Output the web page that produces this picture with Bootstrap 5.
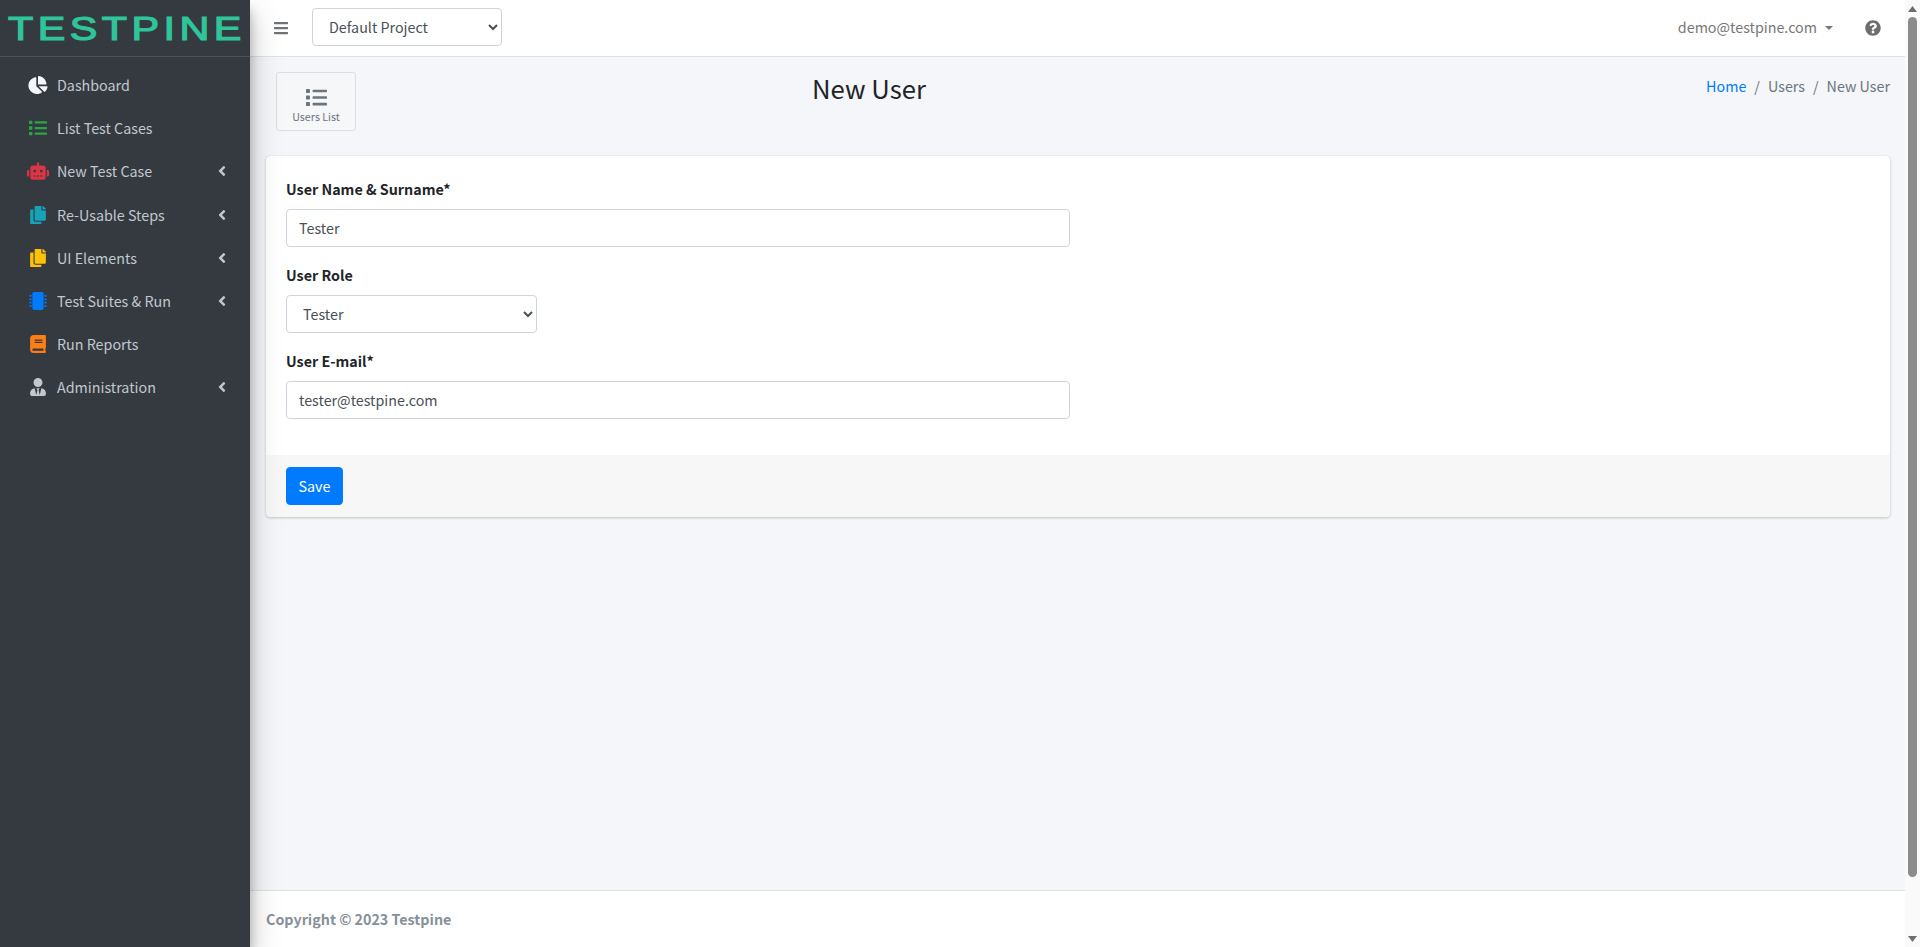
<!DOCTYPE html>
<html lang="en">
<head>
<meta charset="utf-8">
<title>New User</title>
<link href="https://cdn.jsdelivr.net/npm/bootstrap@5.3.0/dist/css/bootstrap.min.css" rel="stylesheet">
<style>
html,body{height:100%;overflow:hidden}
body{font-family:"Noto Sans CJK SC","Noto Sans CJK JP",sans-serif;font-size:14.3px;line-height:24px;color:#212529;background:#f4f6f9}
.app-shell{height:947px}
.side-panel{width:250px;flex:0 0 250px;background:#343a40;box-shadow:0 14px 28px rgba(0,0,0,.25),0 10px 10px rgba(0,0,0,.22);position:relative;z-index:5}
.brand-box{height:57px;border-bottom:1px solid #4b545c;overflow:hidden;padding-left:8px}
.brand-text{display:block;font-family:"Liberation Sans",sans-serif;font-size:33.5px;line-height:58px;font-weight:400;color:#2fc49a;letter-spacing:3.6px;white-space:nowrap;transform-origin:0 50%;transform:scaleX(1.235);-webkit-text-stroke:1.2px #2fc49a}
.side-list{padding-top:8px}
.side-link{height:40px;margin-bottom:3.2px;padding:0 24.5px 0 26.5px;color:#c2c7d0;text-decoration:none}
.side-link span{flex:1;margin-left:8.5px}
.side-ico{width:22px;height:18px;flex:0 0 22px;fill:currentColor}
.chev{width:8px;height:16px;fill:#c2c7d0;flex:0 0 8px}
.ico-white{color:#f4f6f9}.ico-green{color:#28a745}.ico-red{color:#dc3545}.ico-teal{color:#17a2b8}.ico-yellow{color:#ffc107}.ico-blue{color:#007bff}.ico-orange{color:#fd7e14}.ico-gray{color:#c2c7d0}
.main-col{min-width:0}
.top-bar{height:57px;background:#fff;border-bottom:1px solid #dee2e6;padding:0 24px 0 24px}
.bars-ico{width:14px;height:16px;fill:#6f7478}
.native-select{appearance:auto;-webkit-appearance:auto;background-image:none;color:#495057;height:38px;padding:5px 12px 7px;font-size:14.3px;border:1px solid #ced4da;border-radius:4px;background-color:#fff}
.project-select{width:190px;margin-left:24px;margin-bottom:2px}
.user-menu{color:#777;text-decoration:none;margin-right:32px;padding-bottom:2px}
.user-menu::after{content:"";display:inline-block;margin-left:8px;vertical-align:3px;border-top:4px solid #777;border-left:4px solid transparent;border-right:4px solid transparent}
.help-ico{width:16px;height:16px;fill:#6e6e6e}
.content-area{min-height:0;padding:15px 15px 0 16px}
.head-row{height:84px;padding-left:10px}
.tool-btn{width:80px;height:59px;border:1px solid #ddd;border-radius:3px;background:#f6f7f9;color:#6c757d;font-size:10.7px;line-height:16px;padding-top:14px;text-decoration:none}
.tool-ico{width:21px;height:21px;fill:#6c757d;display:block;margin:0 auto 1px}
.page-title{font-size:25.7px;line-height:32px;font-weight:400;margin:0 0 0 456px;white-space:nowrap}
.crumbs{font-size:14.3px;margin:0 0 0 auto;padding-top:2px}
.crumbs .breadcrumb-item+.breadcrumb-item::before{color:#6c757d}
.crumbs a{color:#007bff;text-decoration:none}
.crumbs .active{color:#6c757d}
.form-panel{border:0;border-radius:4px;box-shadow:0 0 1px rgba(0,0,0,.125),0 1px 3px rgba(0,0,0,.2);height:361px;width:1624px}
.form-panel .card-body{padding:21px 20px 20px}
.field-group{margin-bottom:16px}
.field-label{font-weight:700;display:block;margin-bottom:8px;line-height:24px}
.wide-input{width:784px;height:38px;color:#495057;border-color:#ced4da;border-radius:4px;padding:5px 12px 7px;font-size:14.3px}
.role-select{width:251px;display:block}
.panel-foot{background:#f7f7f7;border:0;padding:12px 20px;border-radius:0 0 4px 4px}
.save-btn{background:#007bff;border-color:#007bff;border-radius:4px;height:38px;width:57px;padding:0;font-size:14.3px}
.page-foot{height:57px;background:#fff;border-top:1px solid #dee2e6;padding:0 16px;color:#869099;font-weight:700}
.fake-scroll{width:15px;flex:0 0 15px;background:#fafafa}
.scroll-up,.scroll-down{height:17px}
.scroll-up svg,.scroll-down svg{width:9px;height:6px;fill:#6e6e6e}
.scroll-thumb{height:860px;width:9px;background:#8b8b8b;border-radius:5px}
</style>
</head>
<body>
<div class="app-shell d-flex">
  <aside class="side-panel d-flex flex-column">
    <div class="brand-box"><span class="brand-text">TESTPINE</span></div>
    <nav class="side-list">
      <a class="side-link d-flex align-items-center" href="#"><svg class="side-ico ico-white" viewBox="0 0 544 512"><path d="M527.79 288H290.5l158.03 158.03c6.04 6.04 15.98 6.53 22.19 .68 38.7-36.46 65.32-85.61 73.13-140.86 1.34-9.46-6.51-17.85-16.06-17.85zm-15.83-64.8C503.72 103.74 408.26 8.28 288.8 .04 279.68-.59 272 7.1 272 16.24V240h223.77c9.14 0 16.82-7.68 16.19-16.8zM224 288V50.71c0-9.55-8.39-17.4-17.84-16.06C86.99 51.49-4.1 155.6 .14 280.37 4.5 408.51 114.83 513.59 243.03 511.98c50.4-.63 96.97-16.87 135.26-44.03 7.9-5.6 8.42-17.23 1.57-24.08L224 288z"/></svg><span>Dashboard</span></a>
      <a class="side-link d-flex align-items-center" href="#"><svg class="side-ico ico-green" viewBox="0 0 512 512"><path d="M80 368H16a16 16 0 0 0-16 16v64a16 16 0 0 0 16 16h64a16 16 0 0 0 16-16v-64a16 16 0 0 0-16-16zm0-320H16A16 16 0 0 0 0 64v64a16 16 0 0 0 16 16h64a16 16 0 0 0 16-16V64a16 16 0 0 0-16-16zm0 160H16a16 16 0 0 0-16 16v64a16 16 0 0 0 16 16h64a16 16 0 0 0 16-16v-64a16 16 0 0 0-16-16zm416 176H176a16 16 0 0 0-16 16v32a16 16 0 0 0 16 16h320a16 16 0 0 0 16-16v-32a16 16 0 0 0-16-16zm0-320H176a16 16 0 0 0-16 16v32a16 16 0 0 0 16 16h320a16 16 0 0 0 16-16V80a16 16 0 0 0-16-16zm0 160H176a16 16 0 0 0-16 16v32a16 16 0 0 0 16 16h320a16 16 0 0 0 16-16v-32a16 16 0 0 0-16-16z"/></svg><span>List Test Cases</span></a>
      <a class="side-link d-flex align-items-center" href="#"><svg class="side-ico ico-red" viewBox="0 0 640 512"><path d="M32,224H64V416H32A31.96166,31.96166,0,0,1,0,384V256A31.96166,31.96166,0,0,1,32,224Zm512-48V448a64.06328,64.06328,0,0,1-64,64H160a64.06328,64.06328,0,0,1-64-64V176a79.974,79.974,0,0,1,80-80H288V32a32,32,0,0,1,64,0V96H464A79.974,79.974,0,0,1,544,176ZM264,256a40,40,0,1,0-40,40A39.997,39.997,0,0,0,264,256Zm-8,128H192v32h64Zm96,0H288v32h64ZM456,256a40,40,0,1,0-40,40A39.997,39.997,0,0,0,456,256Zm-8,128H384v32h64ZM640,256V384a31.96166,31.96166,0,0,1-32,32H576V224h32A31.96166,31.96166,0,0,1,640,256Z"/></svg><span>New Test Case</span><svg class="chev" viewBox="0 0 256 512"><path d="M31.7 239l136-136c9.4-9.4 24.6-9.4 33.9 0l22.6 22.6c9.4 9.4 9.4 24.6 0 33.9L127.9 256l96.4 96.4c9.4 9.4 9.4 24.6 0 33.9L201.7 409c-9.4 9.4-24.6 9.4-33.9 0l-136-136c-9.5-9.4-9.5-24.6-.1-34z"/></svg></a>
      <a class="side-link d-flex align-items-center" href="#"><svg class="side-ico ico-teal" viewBox="0 0 448 512"><path d="M320 448v40c0 13.255-10.745 24-24 24H24c-13.255 0-24-10.745-24-24V120c0-13.255 10.745-24 24-24h72v296c0 30.879 25.121 56 56 56h168zm0-344V0H152c-13.255 0-24 10.745-24 24v368c0 13.255 10.745 24 24 24h272c13.255 0 24-10.745 24-24V128H344c-13.2 0-24-10.8-24-24zm120.971-31.029L375.029 7.029A24 24 0 0 0 358.059 0H352v96h96v-6.059a24 24 0 0 0-7.029-16.97z"/></svg><span>Re-Usable Steps</span><svg class="chev" viewBox="0 0 256 512"><path d="M31.7 239l136-136c9.4-9.4 24.6-9.4 33.9 0l22.6 22.6c9.4 9.4 9.4 24.6 0 33.9L127.9 256l96.4 96.4c9.4 9.4 9.4 24.6 0 33.9L201.7 409c-9.4 9.4-24.6 9.4-33.9 0l-136-136c-9.5-9.4-9.5-24.6-.1-34z"/></svg></a>
      <a class="side-link d-flex align-items-center" href="#"><svg class="side-ico ico-yellow" viewBox="0 0 448 512"><path d="M320 448v40c0 13.255-10.745 24-24 24H24c-13.255 0-24-10.745-24-24V120c0-13.255 10.745-24 24-24h72v296c0 30.879 25.121 56 56 56h168zm0-344V0H152c-13.255 0-24 10.745-24 24v368c0 13.255 10.745 24 24 24h272c13.255 0 24-10.745 24-24V128H344c-13.2 0-24-10.8-24-24zm120.971-31.029L375.029 7.029A24 24 0 0 0 358.059 0H352v96h96v-6.059a24 24 0 0 0-7.029-16.97z"/></svg><span>UI Elements</span><svg class="chev" viewBox="0 0 256 512"><path d="M31.7 239l136-136c9.4-9.4 24.6-9.4 33.9 0l22.6 22.6c9.4 9.4 9.4 24.6 0 33.9L127.9 256l96.4 96.4c9.4 9.4 9.4 24.6 0 33.9L201.7 409c-9.4 9.4-24.6 9.4-33.9 0l-136-136c-9.5-9.4-9.5-24.6-.1-34z"/></svg></a>
      <a class="side-link d-flex align-items-center" href="#"><svg class="side-ico ico-blue" viewBox="0 0 512 512"><path d="M416 48v416c0 26.51-21.49 48-48 48H144c-26.51 0-48-21.49-48-48V48c0-26.51 21.49-48 48-48h224c26.51 0 48 21.49 48 48zm96 58v12a6 6 0 0 1-6 6h-18v6a6 6 0 0 1-6 6h-42V88h42a6 6 0 0 1 6 6v6h18a6 6 0 0 1 6 6zm0 96v12a6 6 0 0 1-6 6h-18v6a6 6 0 0 1-6 6h-42v-48h42a6 6 0 0 1 6 6v6h18a6 6 0 0 1 6 6zm0 96v12a6 6 0 0 1-6 6h-18v6a6 6 0 0 1-6 6h-42v-48h42a6 6 0 0 1 6 6v6h18a6 6 0 0 1 6 6zm0 96v12a6 6 0 0 1-6 6h-18v6a6 6 0 0 1-6 6h-42v-48h42a6 6 0 0 1 6 6v6h18a6 6 0 0 1 6 6zM30 376h42v48H30a6 6 0 0 1-6-6v-6H6a6 6 0 0 1-6-6v-12a6 6 0 0 1 6-6h18v-6a6 6 0 0 1 6-6zm0-96h42v48H30a6 6 0 0 1-6-6v-6H6a6 6 0 0 1-6-6v-12a6 6 0 0 1 6-6h18v-6a6 6 0 0 1 6-6zm0-96h42v48H30a6 6 0 0 1-6-6v-6H6a6 6 0 0 1-6-6v-12a6 6 0 0 1 6-6h18v-6a6 6 0 0 1 6-6zm0-96h42v48H30a6 6 0 0 1-6-6v-6H6a6 6 0 0 1-6-6v-12a6 6 0 0 1 6-6h18v-6a6 6 0 0 1 6-6z"/></svg><span>Test Suites &amp; Run</span><svg class="chev" viewBox="0 0 256 512"><path d="M31.7 239l136-136c9.4-9.4 24.6-9.4 33.9 0l22.6 22.6c9.4 9.4 9.4 24.6 0 33.9L127.9 256l96.4 96.4c9.4 9.4 9.4 24.6 0 33.9L201.7 409c-9.4 9.4-24.6 9.4-33.9 0l-136-136c-9.5-9.4-9.5-24.6-.1-34z"/></svg></a>
      <a class="side-link d-flex align-items-center" href="#"><svg class="side-ico ico-orange" viewBox="0 0 448 512"><path d="M448 360V24c0-13.3-10.7-24-24-24H96C43 0 0 43 0 96v320c0 53 43 96 96 96h328c13.3 0 24-10.7 24-24v-16c0-7.5-3.5-14.3-8.9-18.7-4.2-15.4-4.2-59.3 0-74.7 5.4-4.3 8.9-11.1 8.9-18.6zM128 134c0-3.3 2.7-6 6-6h212c3.3 0 6 2.7 6 6v20c0 3.3-2.7 6-6 6H134c-3.3 0-6-2.7-6-6v-20zm0 64c0-3.3 2.7-6 6-6h212c3.3 0 6 2.7 6 6v20c0 3.3-2.7 6-6 6H134c-3.3 0-6-2.7-6-6v-20zm253.4 250H96c-17.7 0-32-14.3-32-32 0-17.6 14.4-32 32-32h285.4c-1.9 17.1-1.9 46.9 0 64z"/></svg><span>Run Reports</span></a>
      <a class="side-link d-flex align-items-center" href="#"><svg class="side-ico ico-gray" viewBox="0 0 448 512"><path d="M224 256c70.7 0 128-57.3 128-128S294.7 0 224 0 96 57.3 96 128s57.3 128 128 128zm95.8 32.6L272 480l-32-136 32-56h-96l32 56-32 136-47.8-191.4C56.9 292 0 350.3 0 422.4V464c0 26.5 21.5 48 48 48h352c26.5 0 48-21.5 48-48v-41.6c0-72.1-56.9-130.4-128.2-133.8z"/></svg><span>Administration</span><svg class="chev" viewBox="0 0 256 512"><path d="M31.7 239l136-136c9.4-9.4 24.6-9.4 33.9 0l22.6 22.6c9.4 9.4 9.4 24.6 0 33.9L127.9 256l96.4 96.4c9.4 9.4 9.4 24.6 0 33.9L201.7 409c-9.4 9.4-24.6 9.4-33.9 0l-136-136c-9.5-9.4-9.5-24.6-.1-34z"/></svg></a>
    </nav>
  </aside>

  <div class="main-col flex-grow-1 d-flex flex-column">
    <header class="top-bar d-flex align-items-center">
      <svg class="bars-ico" viewBox="0 0 448 512"><path d="M16 132h416c8.837 0 16-7.163 16-16V76c0-8.837-7.163-16-16-16H16C7.163 60 0 67.163 0 76v40c0 8.837 7.163 16 16 16zm0 160h416c8.837 0 16-7.163 16-16v-40c0-8.837-7.163-16-16-16H16c-8.837 0-16 7.163-16 16v40c0 8.837 7.163 16 16 16zm0 160h416c8.837 0 16-7.163 16-16v-40c0-8.837-7.163-16-16-16H16c-8.837 0-16 7.163-16 16v40c0 8.837 7.163 16 16 16z"/></svg>
      <select class="native-select project-select"><option>Default Project</option></select>
      <a class="user-menu ms-auto" href="#">demo@testpine.com</a>
      <svg class="help-ico" viewBox="0 0 512 512"><path d="M504 256c0 136.997-111.043 248-248 248S8 392.997 8 256C8 119.083 119.043 8 256 8s248 111.083 248 248zM262.655 90c-54.497 0-89.255 22.957-116.549 63.758-3.536 5.286-2.353 12.415 2.715 16.258l34.699 26.31c5.205 3.947 12.621 3.008 16.665-2.122 17.864-22.658 30.113-35.797 57.303-35.797 20.429 0 45.698 13.148 45.698 32.958 0 14.976-12.363 22.667-32.534 33.976C247.128 238.528 216 254.941 216 296v4c0 6.627 5.373 12 12 12h56c6.627 0 12-5.373 12-12v-1.333c0-28.462 83.186-29.647 83.186-106.667 0-58.002-60.165-102-116.531-102zM256 338c-25.365 0-46 20.635-46 46 0 25.364 20.635 46 46 46s46-20.636 46-46c0-25.365-20.635-46-46-46z"/></svg>
    </header>

    <main class="content-area flex-grow-1">
      <div class="head-row d-flex align-items-start">
        <a class="tool-btn text-center" href="#"><svg class="tool-ico" viewBox="0 0 512 512"><path d="M80 368H16a16 16 0 0 0-16 16v64a16 16 0 0 0 16 16h64a16 16 0 0 0 16-16v-64a16 16 0 0 0-16-16zm0-320H16A16 16 0 0 0 0 64v64a16 16 0 0 0 16 16h64a16 16 0 0 0 16-16V64a16 16 0 0 0-16-16zm0 160H16a16 16 0 0 0-16 16v64a16 16 0 0 0 16 16h64a16 16 0 0 0 16-16v-64a16 16 0 0 0-16-16zm416 176H176a16 16 0 0 0-16 16v32a16 16 0 0 0 16 16h320a16 16 0 0 0 16-16v-32a16 16 0 0 0-16-16zm0-320H176a16 16 0 0 0-16 16v32a16 16 0 0 0 16 16h320a16 16 0 0 0 16-16V80a16 16 0 0 0-16-16zm0 160H176a16 16 0 0 0-16 16v32a16 16 0 0 0 16 16h320a16 16 0 0 0 16-16v-32a16 16 0 0 0-16-16z"/></svg>Users List</a>
        <h1 class="page-title">New User</h1>
        <ol class="breadcrumb crumbs">
          <li class="breadcrumb-item"><a href="#">Home</a></li>
          <li class="breadcrumb-item active">Users</li>
          <li class="breadcrumb-item active">New User</li>
        </ol>
      </div>
      <div class="card form-panel">
        <div class="card-body">
          <div class="field-group"><label class="field-label">User Name &amp; Surname*</label><input class="form-control wide-input" value="Tester"></div>
          <div class="field-group"><label class="field-label">User Role</label><select class="native-select role-select"><option>Tester</option></select></div>
          <div class="field-group"><label class="field-label">User E-mail*</label><input class="form-control wide-input" value="tester@testpine.com"></div>
        </div>
        <div class="card-footer panel-foot"><button class="btn btn-primary save-btn" type="button">Save</button></div>
      </div>
    </main>

    <footer class="page-foot d-flex align-items-center">Copyright © 2023 Testpine</footer>
  </div>

  <div class="fake-scroll d-flex flex-column align-items-center">
    <div class="scroll-up d-flex align-items-center justify-content-center"><svg viewBox="0 0 9 6"><path d="M4.5 0 9 6H0z"/></svg></div>
    <div class="scroll-thumb"></div>
    <div class="scroll-down d-flex align-items-center justify-content-center mt-auto"><svg viewBox="0 0 9 6"><path d="M0 0h9L4.5 6z"/></svg></div>
  </div>
</div>
<script src="https://cdn.jsdelivr.net/npm/bootstrap@5.3.0/dist/js/bootstrap.bundle.min.js"></script>
</body>
</html>
